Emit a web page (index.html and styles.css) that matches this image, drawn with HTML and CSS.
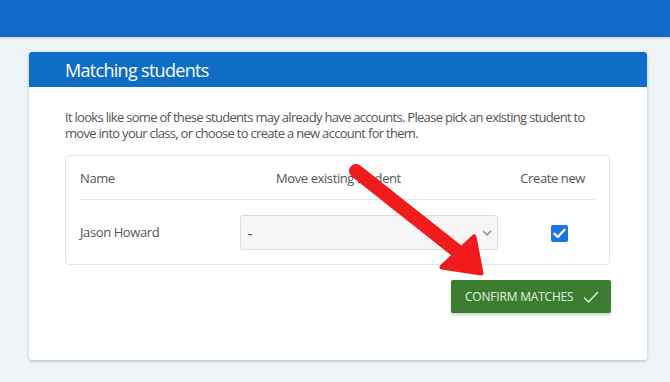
FILE: index.html
```html
<!DOCTYPE html>
<html>
<head>
<meta charset="utf-8">
<link rel="stylesheet" href="styles.css">
</head>
<body>
<div class="topbar"></div>
<div class="main">
  <div class="card">
    <div class="card-header"><h2 class="title">Matching students</h2></div>
    <div class="card-body">
      <p class="intro">It looks like some of these students may already have accounts. Please pick an existing student to move into your class, or choose to create a new account for them.</p>
      <div class="matches">
        <div class="row head">
          <div class="cell c-name">Name</div>
          <div class="cell c-move">Move existing student</div>
          <div class="cell c-new">Create new</div>
        </div>
        <div class="row body">
          <div class="cell c-name">Jason Howard</div>
          <div class="cell c-sel">
            <div class="select"><span>-</span>
              <svg class="chev" width="10" height="6" viewBox="0 0 10 6"><path d="M1 1 L5 5 L9 1" fill="none" stroke="#8a8a8a" stroke-width="1.4"/></svg>
            </div>
          </div>
          <div class="cell c-new">
            <span class="checkbox"><svg width="13" height="11" viewBox="0 0 13 11"><path d="M1.5 5.8 L4.8 9 L11.5 1.8" fill="none" stroke="#fff" stroke-width="2.4" stroke-linecap="round" stroke-linejoin="round"/></svg></span>
          </div>
        </div>
      </div>
      <div class="actions">
        <button class="confirm">CONFIRM MATCHES
          <svg class="tick" width="16" height="12" viewBox="0 0 16 12"><path d="M1 6.5 L5.5 11 L15 1" fill="none" stroke="#e8f0e6" stroke-width="1.4"/></svg>
        </button>
      </div>
    </div>
  </div>
</div>
<svg class="arrow" width="670" height="382" viewBox="0 0 670 382">
  <line x1="356" y1="171" x2="457" y2="251" stroke="#f21b1b" stroke-width="14" stroke-linecap="round"/>
  <path d="M442 267 L474 237 L481 273 Z" fill="#f21b1b" stroke="#f21b1b" stroke-width="5" stroke-linejoin="round"/>
</svg>
</body>
</html>
```
FILE: styles.css
```css
html, body {
  margin: 0;
  padding: 0;
}
body {
  background: #eef3f8;
  font-family: "Open Sans", "Noto Sans", sans-serif;
  width: 670px;
  height: 382px;
  overflow: hidden;
  position: relative;
}
.topbar {
  height: 37px;
  background: #0f6bc7;
  box-shadow: 0 1px 2px rgba(0,0,0,0.18);
}
.main {
  padding: 15px 0 0 29px;
}
.card {
  width: 618px;
  background: #fff;
  border-radius: 3px;
  box-shadow: 0 1px 3px rgba(0,0,0,0.25);
  overflow: hidden;
}
.card-header {
  height: 35px;
  background: #0f6cc7;
  padding-left: 36px;
  display: flex;
  align-items: center;
}
.title {
  margin: 0;
  color: #fff;
  font-weight: 400;
  font-size: 18px;
  letter-spacing: -0.7px;
}
.card-body {
  padding: 22px 37px 47px 36px;
}
.intro {
  margin: 0 0 14px 0;
  font-size: 13px;
  line-height: 16px;
  color: #555;
  letter-spacing: -0.7px;
}
.matches {
  border: 1px solid #e6e6e6;
  border-radius: 4px;
  padding: 0 14px;
}
.row {
  display: grid;
  grid-template-columns: 160px 258px 1fr;
  align-items: center;
}
.row.head {
  height: 43px;
  border-bottom: 1px solid #e6e6e6;
  font-size: 13px;
  color: #555;
  letter-spacing: -0.4px;
}
.row.body {
  height: 64px;
  font-size: 13px;
  color: #555;
  letter-spacing: -0.4px;
}
.c-move {
  padding-left: 36px;
}
.c-new {
  padding-left: 20px;
  text-align: center;
  white-space: nowrap;
}
.row.head .c-new {
  padding: 0 10px 0 0;
  text-align: right;
}
.select {
  height: 33px;
  background: #f5f5f5;
  border: 1px solid #dcdcdc;
  border-radius: 3px;
  display: flex;
  align-items: center;
  justify-content: space-between;
  padding: 0 5px 0 7px;
  color: #444;
}
.select span {
  font-size: 14px;
  padding-top: 2px;
}
.chev {
  margin-top: 1px;
}
.c-new .checkbox {
  display: inline-flex;
  width: 17px;
  height: 17px;
  background: #1b74e4;
  border-radius: 2px;
  align-items: center;
  justify-content: center;
  vertical-align: middle;
  margin-left: 6px;
}
.actions {
  display: flex;
  justify-content: flex-end;
  margin-top: 15px;
  margin-right: -1px;
}
.confirm {
  width: 160px;
  height: 33px;
  border: none;
  border-radius: 2px;
  background: #3a7d2e;
  color: #e8f0e6;
  font-family: "Open Sans", "Noto Sans", sans-serif;
  font-size: 12px;
  letter-spacing: -0.2px;
  display: flex;
  align-items: center;
  padding: 0 0 0 14px;
  box-shadow: 0 2px 3px rgba(0,0,0,0.2);
}
.tick {
  margin-left: 10px;
}
.arrow {
  position: absolute;
  left: 0;
  top: 0;
  pointer-events: none;
}
```
